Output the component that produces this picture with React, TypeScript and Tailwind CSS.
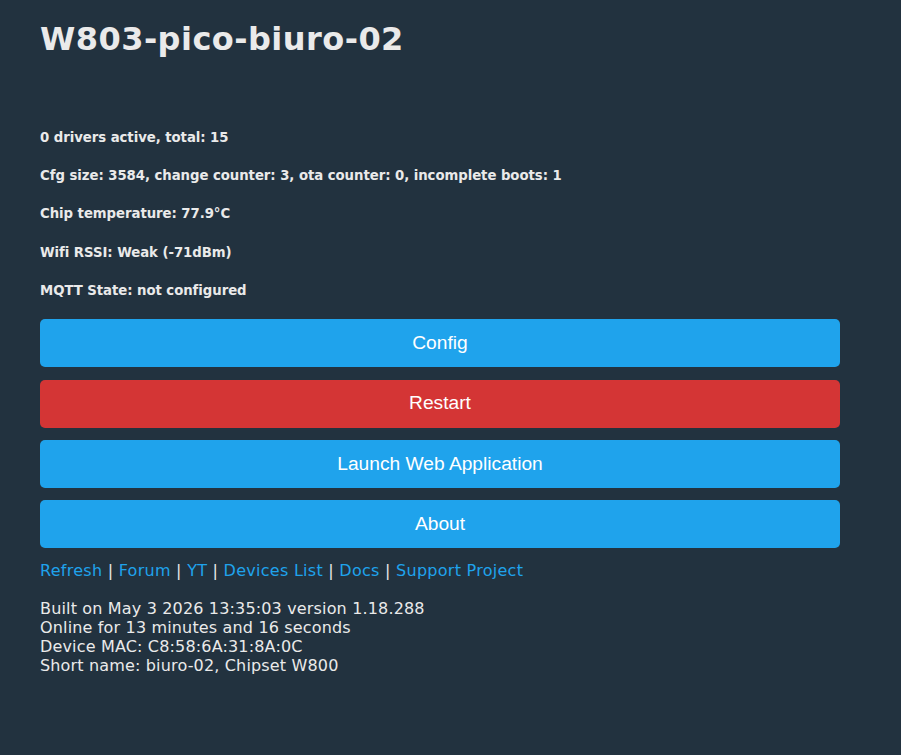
import React from "react";

const font = { fontFamily: '"DejaVu Sans", Verdana, sans-serif' };

function Btn({ label, red }: { label: string; red?: boolean }) {
  return (
    <div
      className={`h-[48px] w-[800px] rounded-[5px] flex items-center justify-center text-white text-[19.2px] mb-[12.3px] ${red ? "bg-[#d43535]" : "bg-[#1fa3ec]"}`}
      style={{ fontFamily: '"Liberation Sans", Arial, sans-serif' }}
    >
      {label}
    </div>
  );
}

export default function App() {
  const status = [
    "0 drivers active, total: 15",
    "Cfg size: 3584, change counter: 3, ota counter: 0, incomplete boots: 1",
    "Chip temperature: 77.9°C",
    "Wifi RSSI: Weak (-71dBm)",
    "MQTT State: not configured",
  ];
  const links = ["Refresh", "Forum", "YT", "Devices List", "Docs", "Support Project"];
  return (
    <div className="min-h-[755px] w-full bg-[#22323f] text-[#eaeaea] pl-[40px] pt-[21.4px]" style={font}>
      <h1 className="text-[32px] font-bold leading-[37.25px] m-0 tracking-[0.45px]">W803-pico-biuro-02</h1>
      <div className="mt-[71.35px] flex flex-col gap-[22.25px]">
        {status.map((s) => (
          <div key={s} className="text-[13.28px] font-bold leading-[16px] tracking-[-0.05px]">
            {s}
          </div>
        ))}
      </div>
      <div className="mt-[20.5px]">
        <Btn label="Config" />
        <Btn label="Restart" red />
        <Btn label="Launch Web Application" />
        <Btn label="About" />
      </div>
      <div className="mt-[0.7px] text-[16px] leading-[19px] tracking-[0.27px]">
        {links.map((l, i) => (
          <React.Fragment key={l}>
            <span className="text-[#1fa3ec]">{l}</span>
            {i < links.length - 1 && <span> | </span>}
          </React.Fragment>
        ))}
      </div>
      <div className="mt-[19px] text-[16px] leading-[19px] tracking-[0.16px]">
        <div>Built on May 3 2026 13:35:03 version 1.18.288</div>
        <div>Online for 13 minutes and 16 seconds</div>
        <div>Device MAC: C8:58:6A:31:8A:0C</div>
        <div>Short name: biuro-02, Chipset W800</div>
      </div>
    </div>
  );
}
